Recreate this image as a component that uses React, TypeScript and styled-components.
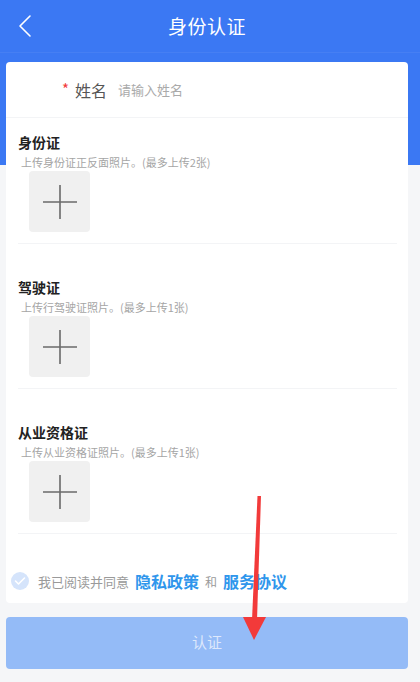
import styled, { createGlobalStyle } from "styled-components";

const GlobalStyle = createGlobalStyle`
  html, body {
    margin: 0;
    padding: 0;
  }
  body {
    font-family: "Noto Sans CJK SC", "Noto Sans", sans-serif;
    background: #f5f6f8;
  }
`;

const Page = styled.div`
  position: relative;
  width: 420px;
  height: 682px;
  overflow: hidden;
  background: linear-gradient(#3b78f3 0, #3b78f3 165px, #f5f6f8 165px);
`;

const Header = styled.div`
  height: 53px;
  display: flex;
  align-items: center;
  justify-content: center;
  position: relative;
  padding-right: 6px;
  border-bottom: 1px solid rgba(255, 255, 255, 0.06);
  box-sizing: border-box;
`;

const BackButton = styled.div`
  position: absolute;
  left: 16px;
  top: 14px;
  width: 18px;
  height: 24px;
  display: flex;
`;

const Title = styled.div`
  color: #fff;
  font-size: 19px;
  letter-spacing: 0.5px;
  margin-top: -2px;
`;

const Body = styled.div`
  padding: 9px 12px 0 6px;
  display: flex;
  flex-direction: column;
  gap: 14px;
`;

const Card = styled.div`
  background: #fff;
  border-radius: 4px;
  display: flex;
  flex-direction: column;
  padding-bottom: 11px;
`;

const NameRow = styled.div`
  height: 56px;
  display: flex;
  align-items: center;
  padding-left: 56px;
  border-bottom: 1px solid #f3f4f6;
  box-sizing: border-box;
`;

const Star = styled.span`
  color: #f23b3b;
  font-size: 15px;
  margin-right: 6px;
  position: relative;
  top: -1px;
`;

const Label = styled.span`
  color: #555;
  font-size: 16px;
  margin-right: 11px;
`;

const Placeholder = styled.span`
  color: #aaa;
  font-size: 13px;
`;

const Section = styled.div<{ $top: number }>`
  margin: 0 11px 0 12px;
  padding-top: ${(p) => p.$top}px;
  padding-bottom: 11px;
  border-bottom: 1px solid #f3f4f6;
  display: flex;
  flex-direction: column;
`;

const SectionTitle = styled.div`
  font-size: 14px;
  font-weight: 700;
  color: #222;
  line-height: 20px;
`;

const Hint = styled.div`
  font-size: 11px;
  color: #a5a5a5;
  line-height: 16px;
  margin: 2px 0 1px 3px;
`;

const UploadBox = styled.div`
  width: 61px;
  height: 61px;
  margin-left: 11px;
  background: #f0f0f0;
  border-radius: 4px;
  display: flex;
  align-items: center;
  justify-content: center;
`;

const Agreement = styled.div`
  margin-top: 36px;
  height: 22px;
  display: flex;
  align-items: center;
  padding-left: 5px;
`;

const Check = styled.div`
  width: 18px;
  height: 18px;
  border-radius: 50%;
  background: #d5e4fb;
  display: flex;
  align-items: center;
  justify-content: center;
  margin-right: 9px;
`;

const Muted = styled.span<{ $size: number }>`
  color: #9a9a9a;
  font-size: ${(p) => p.$size}px;
  margin-right: 6px;
`;

const Link = styled.span`
  color: #2f96ec;
  font-size: 16px;
  font-weight: 700;
  margin-right: 6px;
`;

const SubmitButton = styled.div`
  height: 52px;
  background: #94bbf7;
  border-radius: 4px;
  display: flex;
  align-items: center;
  justify-content: center;
  color: #dde8fc;
  font-size: 15px;
  padding-bottom: 4px;
  box-sizing: border-box;
`;

const Arrow = styled.svg`
  position: absolute;
  left: 0;
  top: 0;
  pointer-events: none;
`;

const sections = [
  { title: "身份证", hint: "上传身份证正反面照片。(最多上传2张)", top: 14 },
  { title: "驾驶证", hint: "上传行驾驶证照片。(最多上传1张)", top: 33 },
  { title: "从业资格证", hint: "上传从业资格证照片。(最多上传1张)", top: 33 },
];

function Plus() {
  return (
    <svg width="34" height="34" viewBox="0 0 34 34">
      <path d="M17 0v34M0 17h34" stroke="#6a6a6a" strokeWidth="1.6" />
    </svg>
  );
}

function App() {
  return (
    <Page>
      <GlobalStyle />
      <Header>
        <BackButton>
          <svg width="18" height="24" viewBox="0 0 18 24">
            <path
              d="M14 2L4 12l10 10"
              fill="none"
              stroke="#fff"
              strokeWidth="1.6"
              strokeLinecap="round"
              strokeLinejoin="round"
            />
          </svg>
        </BackButton>
        <Title>身份认证</Title>
      </Header>
      <Body>
        <Card>
          <NameRow>
            <Star>*</Star>
            <Label>姓名</Label>
            <Placeholder>请输入姓名</Placeholder>
          </NameRow>
          {sections.map((s) => (
            <Section key={s.title} $top={s.top}>
              <SectionTitle>{s.title}</SectionTitle>
              <Hint>{s.hint}</Hint>
              <UploadBox>
                <Plus />
              </UploadBox>
            </Section>
          ))}
          <Agreement>
            <Check>
              <svg width="12" height="10" viewBox="0 0 12 10">
                <path
                  d="M1.5 5l3 3 6-6"
                  fill="none"
                  stroke="#fff"
                  strokeWidth="1.6"
                  strokeLinecap="round"
                  strokeLinejoin="round"
                />
              </svg>
            </Check>
            <Muted $size={13}>我已阅读并同意</Muted>
            <Link>隐私政策</Link>
            <Muted $size={12}>和</Muted>
            <Link>服务协议</Link>
          </Agreement>
        </Card>
        <SubmitButton>认证</SubmitButton>
      </Body>
      <Arrow width="420" height="682" viewBox="0 0 420 682">
        <path d="M257.5 496L261 496L257 620L252 620Z" fill="#f23a3a" />
        <path d="M243 617L266 617L254 640Z" fill="#f23a3a" />
      </Arrow>
    </Page>
  );
}

export default App;
